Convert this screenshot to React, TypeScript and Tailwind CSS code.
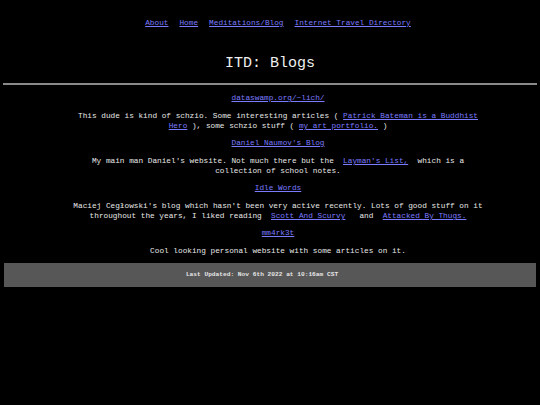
import React from 'react';

const link = 'text-[#7b7bff] underline';
const sp = '\u00a0';

function Entry({ name, children }: { name: string; children: React.ReactNode }) {
  return (
    <div className="pl-4 text-center">
      <div className="h-[11px] leading-[11px]">
        <a href="#" className={link}>{name}</a>
      </div>
      <p className="mx-auto mt-[7px] w-[420px] leading-[10px]">{children}</p>
    </div>
  );
}

export default function App() {
  return (
    <div
      className="min-h-[405px] w-[540px] bg-black text-[7.75px] text-[#e8e8e8]"
      style={{ fontFamily: '"Liberation Mono", monospace' }}
    >
      <nav className="flex justify-center gap-[11px] pl-4 pt-[18px] leading-[10px]">
        <a href="#" className={link}>About</a>
        <a href="#" className={link}>Home</a>
        <a href="#" className={link}>Meditations/Blog</a>
        <a href="#" className={link}>Internet Travel Directory</a>
      </nav>

      <h1 className="mt-[27px] text-center text-[15px] leading-[18px] text-[#f0f0f0]">ITD: Blogs</h1>

      <hr className="mx-[3px] mt-[10px] h-[2px] border-0 bg-[#8a8a8a]" />

      <div className="mt-[8px] flex flex-col gap-[7px]">
        <Entry name="dataswamp.org/~lich/">
          This dude is kind of schzio. Some interesting articles ({' '}
          <a href="#" className={link}>Patrick Bateman is a Buddhist Hero</a> ), some schzio stuff ({' '}
          <a href="#" className={link}>my art portfolio.</a> )
        </Entry>
        <Entry name="Daniel Naumov's Blog">
          My main man Daniel's website. Not much there but the{sp}{' '}
          <a href="#" className={link}>Layman's List,</a>{sp}{' '}which is a collection of school notes.
        </Entry>
        <Entry name="Idle Words">
          Maciej Cegłowski's blog which hasn't been very active recently. Lots of good stuff on it
          throughout the years, I liked reading{sp}{' '}
          <a href="#" className={link}>Scott And Scurvy</a>{sp}{sp} and{sp}{' '}
          <a href="#" className={link}>Attacked By Thugs.</a>
        </Entry>
        <Entry name="mm4rk3t">Cool looking personal website with some articles on it.</Entry>
      </div>

      <footer className="mx-[4px] mt-[7px] flex h-[24px] items-center justify-center bg-[#575757] pr-4">
        <span className="text-[6.2px] font-bold text-[#e6e6e6]">Last Updated: Nov 6th 2022 at 10:16am CST</span>
      </footer>
    </div>
  );
}
